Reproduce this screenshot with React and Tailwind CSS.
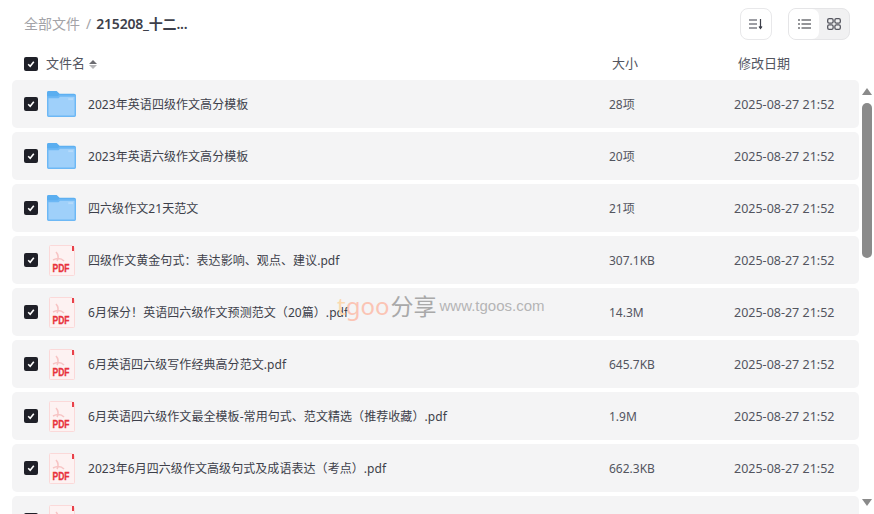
import React from 'react';

const FONT = "font-['Noto_Sans','Noto_Sans_CJK_SC',sans-serif]";

const rows = [
  { type: 'folder', name: '2023年英语四级作文高分模板', size: '28项' },
  { type: 'folder', name: '2023年英语六级作文高分模板', size: '20项' },
  { type: 'folder', name: '四六级作文21天范文', size: '21项' },
  { type: 'pdf', name: '四级作文黄金句式：表达影响、观点、建议.pdf', size: '307.1KB' },
  { type: 'pdf', name: '6月保分！英语四六级作文预测范文（20篇）.pdf', size: '14.3M' },
  { type: 'pdf', name: '6月英语四六级写作经典高分范文.pdf', size: '645.7KB' },
  { type: 'pdf', name: '6月英语四六级作文最全模板-常用句式、范文精选（推荐收藏）.pdf', size: '1.9M' },
  { type: 'pdf', name: '2023年6月四六级作文高级句式及成语表达（考点）.pdf', size: '662.3KB' },
  { type: 'pdf', name: '', size: '' },
];

function Check() {
  return (
    <div className="flex h-[14px] w-[14px] shrink-0 items-center justify-center rounded-[2px] bg-[#1f2028]">
      <svg width="8" height="8" viewBox="0 0 8 8" fill="none">
        <path d="M1.2 4.2 L3.2 6.2 L6.8 1.8" stroke="white" strokeWidth="1.6" />
      </svg>
    </div>
  );
}

function FolderIcon() {
  return (
    <svg width="30" height="28" viewBox="0 0 30 28">
      <path d="M0 2 a1.5 1.5 0 0 1 1.5-1.5 H10 L13 3.5 H28 a2 2 0 0 1 2 2 V8 H0 Z" fill="#5aaef0" />
      <path d="M0 6 H11 L13 4.5 H28.5 a1.5 1.5 0 0 1 1.5 1.5 V26 a1.5 1.5 0 0 1-1.5 1.5 H1.5 A1.5 1.5 0 0 1 0 26 Z" fill="#6db8f5" />
      <path d="M1.5 8 L12 8 L13.5 6.5 H28.5 V26 H1.5 Z" fill="#9fd0fa" />
      <rect x="22" y="8" width="5" height="2" fill="#b5dafb" />
    </svg>
  );
}

function PdfIcon() {
  return (
    <svg width="26" height="31" viewBox="0 0 26 31">
      <path d="M0.5 1.5 a1 1 0 0 1 1-1 H23 L25.5 3 V29.5 a1 1 0 0 1-1 1 H1.5 a1 1 0 0 1-1-1 Z" fill="#fdf2f2" stroke="#fbd9d9" />
      <rect x="23" y="1" width="2" height="5" fill="#e8414a" />
      <path d="M7 7 C9 9 10 13 8 16 M4 15 C8 13 12 13 15 16" fill="none" stroke="#f7c4c4" strokeWidth="1.6" />
      <text x="12" y="26.5" textAnchor="middle" fill="#e8323c" stroke="#e8323c" strokeWidth="0.3" fontSize="11" fontWeight="700" fontFamily="Liberation Sans, sans-serif" textLength="17" lengthAdjust="spacingAndGlyphs">PDF</text>
    </svg>
  );
}

function Row({ row }) {
  return (
    <div className="flex h-12 shrink-0 items-center rounded-[5px] bg-[#f4f4f5] pl-[12px] text-[12px] text-[#3d3f4a]">
      <Check />
      <div className="ml-[9px] flex w-[29px] shrink-0 justify-center">
        {row.type === 'folder' ? <FolderIcon /> : <PdfIcon />}
      </div>
      <div className="ml-[12px] w-[521px] truncate pt-[1px] tracking-[0.06px]">{row.name}</div>
      <div className="w-[125px] shrink-0 pt-[1px] text-[#53555f]">{row.size}</div>
      {row.size && <div className="shrink-0 pt-[2px] text-[12.5px] text-[#53555f]">2025-08-27 21:52</div>}
    </div>
  );
}

function Scrollbar() {
  return (
    <div className="ml-[2px] flex w-[12px] shrink-0 flex-col items-center pt-[8px]">
      <div className="h-0 w-0 border-x-[5px] border-b-[7px] border-x-transparent border-b-[#8a8a8a]" />
      <div className="mt-[8px] h-[155px] w-[10px] rounded-[5px] bg-[#8a8a8a]" />
      <div className="mt-[241px] h-0 w-0 border-x-[5px] border-t-[7px] border-x-transparent border-t-[#8a8a8a]" />
    </div>
  );
}

export default function App() {
  return (
    <div className={`relative flex h-[514px] w-[874px] flex-col overflow-hidden bg-white ${FONT}`}>
      {/* toolbar */}
      <div className="flex h-[48px] shrink-0 items-center pl-[24px] pr-[24px]">
        <span className="mb-[1px] text-[14px] text-[#a3a3a8]">全部文件</span>
        <span className="mb-[1px] ml-[6px] mr-[5px] text-[14px] text-[#a3a3a8]">/</span>
        <span className="mb-[1px] text-[14px] font-semibold tracking-[-0.2px] text-[#3d3f4a]">215208_十二...</span>
        <button type="button" className="ml-auto flex h-8 w-8 items-center justify-center rounded-[8px] border border-[#e8e8ea] bg-white">
          <svg width="14" height="12" viewBox="0 0 14 12" fill="none" stroke="#3d3f4a" strokeWidth="1.2">
            <path d="M0 2 H8 M0 6 H8 M0 10 H8 M11.5 1 V10" />
            <path d="M10 8.5 L11.5 10.5 L13 8.5" fill="#3d3f4a" />
          </svg>
        </button>
        <div className="ml-[16px] flex h-8 w-[62px] rounded-[8px] border border-[#e5e5e7] bg-[#f1f1f2]">
          <div className="flex w-[30px] items-center justify-center rounded-[7px] bg-white">
            <svg width="13" height="10" viewBox="0 0 13 10" stroke="#2b2c33" strokeWidth="1.2">
              <path d="M3.5 1 H13 M3.5 5 H13 M3.5 9 H13 M0 1 H2 M0 5 H2 M0 9 H2" />
            </svg>
          </div>
          <div className="flex flex-1 items-center justify-center">
            <svg width="14" height="12" viewBox="0 0 14 12" fill="none" stroke="#55565f" strokeWidth="1.3">
              <rect x="0.7" y="0.7" width="5.4" height="4.4" rx="1.4" />
              <rect x="7.9" y="0.7" width="5.4" height="4.4" rx="1.4" />
              <rect x="0.7" y="6.9" width="5.4" height="4.4" rx="1.4" />
              <rect x="7.9" y="6.9" width="5.4" height="4.4" rx="1.4" />
            </svg>
          </div>
        </div>
      </div>

      {/* header */}
      <div className="flex h-[32px] shrink-0 items-center pl-[24px] text-[13px] text-[#53555f]">
        <Check />
        <span className="ml-[8px]">文件名</span>
        <div className="ml-[4px] flex flex-col gap-[1px]">
          <div className="h-0 w-0 border-x-[4px] border-b-[4px] border-x-transparent border-b-[#6b6b70]" />
          <div className="h-0 w-0 border-x-[4px] border-t-[4px] border-x-transparent border-t-[#b5b5b8]" />
        </div>
        <span className="ml-[515px] w-[126px]">大小</span>
        <span>修改日期</span>
      </div>

      {/* list */}
      <div className="flex min-h-0 flex-1 pl-[12px] pr-[1px]">
        <div className="flex flex-1 flex-col gap-1 overflow-hidden">
          {rows.map((row, index) => (
            <Row key={index} row={row} />
          ))}
        </div>
        <Scrollbar />
      </div>

      {/* watermark */}
      <div className="pointer-events-none absolute left-[337px] top-[290px] flex items-center whitespace-nowrap">
        <span className="text-[24px] leading-[32px] text-[#fbd9b0]">t</span>
        <span className="text-[24px] leading-[32px] text-[#fbc4b4]">goo</span>
        <span className="ml-[1px] text-[23px] leading-[32px] text-[#a9a9a9]">分享</span>
        <span className="ml-[3px] font-['Liberation_Sans',sans-serif] text-[15px] leading-[32px] text-[#b5b5b5]">www.tgoos.com</span>
      </div>
    </div>
  );
}
